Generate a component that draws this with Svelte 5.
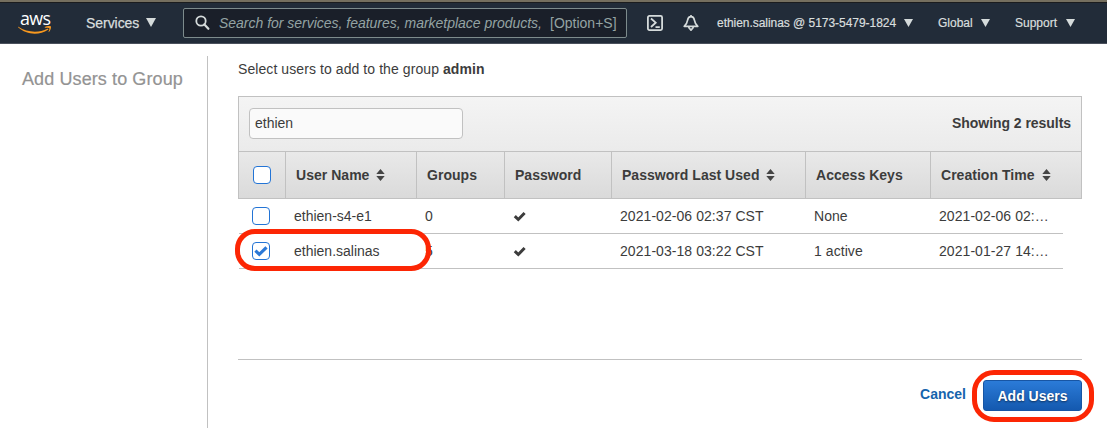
<script>
  const users = [
    { name: 'ethien-s4-e1', groups: 0, last: '2021-02-06 02:37 CST', keys: 'None', created: '2021-02-06 02:…', checked: false },
    { name: 'ethien.salinas', groups: 5, last: '2021-03-18 03:22 CST', keys: '1 active', created: '2021-01-27 14:…', checked: true }
  ];
  const columns = [
    { label: 'User Name', sort: true },
    { label: 'Groups' },
    { label: 'Password' },
    { label: 'Password Last Used', sort: true },
    { label: 'Access Keys' },
    { label: 'Creation Time', sort: true }
  ];
</script>

{#snippet caret(w, h)}
  <svg class="caret" width={w} height={h} viewBox="0 0 10 9" preserveAspectRatio="none"><path d="M0 0h10L5 9z" fill="#d5dbdb" /></svg>
{/snippet}

{#snippet tick()}
  <svg class="tick" width="13" height="11" viewBox="0 0 13 11"><path d="M1.800 5.100l3.500 3.400L11.600 2" fill="none" stroke="#3c3c3c" stroke-width="3" /></svg>
{/snippet}

<header class="top">
  <div class="logo">
    <span class="aws">aws</span>
    <svg width="34" height="9" viewBox="0 0 34 9">
      <path d="M.4.8C9 6.700 21 7.200 29.400 2.800c.8-.4 1.400.4.6 1C21.500 9.500 8.500 9.200.1 1.300-.2.9 0 .6.4.8z" fill="#f7981f" />
      <path d="M26.800 1.200c2-1.300 5.600-1.300 6.100-.7.400.6-.3 4.200-2 5.600-.3.200-.5.100-.4-.2.500-1.200 1.200-3 .8-3.600-.5-.6-2.800-.4-4.300-.6-.3 0-.4-.3-.2-.5z" fill="#f7981f" />
    </svg>
  </div>
  <div class="services"><span>Services</span>{@render caret(10, 9)}</div>
  <div class="search">
    <svg width="16" height="16" viewBox="0 0 16 16"><circle cx="6" cy="6" r="4.700" fill="none" stroke="#d5dbdb" stroke-width="1.800" /><path d="M9.400 9.400l4 4.400" stroke="#d5dbdb" stroke-width="2.200" stroke-linecap="round" /></svg>
    <i>Search for services, features, marketplace products,</i>
    <span>[Option+S]</span>
  </div>
  <svg class="shell" width="16" height="16" viewBox="0 0 16 16" fill="none" stroke="#d5dbdb" stroke-width="1.800"><rect x=".9" y=".9" width="14.200" height="14.200" rx="1.500" /><path d="M4 3.500L8.700 7.700 4 12M8.500 12.200h4.300" /></svg>
  <svg class="bell" width="16" height="16" viewBox="0 0 16 16" fill="none" stroke="#d5dbdb" stroke-width="1.700" stroke-linejoin="round"><path d="M8 1.700C6 1.700 4.900 3.100 4.600 5.200 4.200 8 3.400 9.400 1.200 11.300h13.600c-2.200-1.900-3-3.300-3.400-6.100C11.100 3.100 10 1.700 8 1.700zM8 .1v1.600M5.900 11.800v1L8 15.100l2.100-2.300v-1" /></svg>
  <div class="menu account"><span>ethien.salinas @ 5173-5479-1824</span>{@render caret(9, 8)}</div>
  <div class="menu global"><span>Global</span>{@render caret(9, 8)}</div>
  <div class="menu support"><span>Support</span>{@render caret(9, 8)}</div>
</header>

<div class="page">
  <aside><h1>Add Users to Group</h1></aside>
  <main>
    <p>Select users to add to the group <b>admin</b></p>
    <section class="table">
      <div class="toolbar">
        <div class="filter"><span>ethien</span></div>
        <b>Showing 2 results</b>
      </div>
      <div class="grid head">
        <div class="pick"><span class="box"></span></div>
        {#each columns as c}
          <div class="cell">
            <span>{c.label}</span>
            {#if c.sort}
              <svg width="9" height="12" viewBox="0 0 9 12"><path d="M.3 5L4.500 0l4.200 5zM.3 7L4.500 12l4.200-5z" fill="#444" /></svg>
            {/if}
          </div>
        {/each}
      </div>
      <div class="rows">
        {#each users as u}
          <div class="grid row">
            <div class="pick">
              <span class="box">
                {#if u.checked}
                  <svg width="16" height="16" viewBox="0 0 16 16"><path d="M2.400 7.600l3.900 3.700 7.200-6.900" fill="none" stroke="#2b78d6" stroke-width="3.200" /></svg>
                {/if}
              </span>
              {#if u.checked}<span class="ring user-ring"></span>{/if}
            </div>
            <div class="cell"><span>{u.name}</span></div>
            <div class="cell">{u.groups}</div>
            <div class="cell">{@render tick()}</div>
            <div class="cell"><span class="date">{u.last}</span></div>
            <div class="cell"><span class="date">{u.keys}</span></div>
            <div class="cell"><span class="date">{u.created}</span></div>
          </div>
        {/each}
      </div>
    </section>
    <footer>
      <span class="cancel">Cancel</span>
      <div class="add"><span>Add Users</span><span class="ring add-ring"></span></div>
    </footer>
  </main>
</div>

<style>
  :global(body) { background: #fff; overflow: hidden; }
  :global(#app) { font-family: "Liberation Sans", Arial, sans-serif; font-size: 14px; color: #3c3c3c; }
  svg { display: block; flex: none; }
  span, b, i { white-space: nowrap; }
  .top { box-sizing: border-box; height: 44px; display: flex; align-items: center; background: #222c39; border-top: 2px solid #756f5f; border-bottom: 1px solid #4a505c; box-shadow: inset 0 1px #1b1c1e; color: #d9dede; }
  .logo { width: 34px; height: 24px; margin-left: 18px; display: flex; flex-direction: column; align-items: center; }
  .aws { font: 500 19px/15px "Open Sans", sans-serif; height: 16px; color: #fff; margin-top: 0; letter-spacing: -.6px; transform: scaleX(.94); }
  .services { width: 97px; margin-left: 34px; display: flex; align-items: center; -webkit-text-stroke: .25px; }
  .services span { width: 60px; letter-spacing: -.05px; }
  .search { box-sizing: border-box; width: 444px; height: 30px; display: flex; align-items: center; padding: 0 9px 0 11px; background: #1a1f29; border: 1px solid #7d8b8c; border-radius: 2px; color: #94a3a3; }
  .search i { margin-left: 8px; width: 331px; letter-spacing: -.015px; }
  .shell { margin-left: 20px; }
  .bell { margin-left: 20px; }
  .menu { display: flex; align-items: center; font-size: 12px; -webkit-text-stroke: .2px; }
  .account { margin-left: 18px; width: 221px; }
  .account span { width: 187px; letter-spacing: -.04px; }
  .global { width: 77px; }
  .global span { width: 43px; }
  .support span { width: 51px; }
  .page { display: flex; height: 384px; }
  aside { box-sizing: border-box; width: 208px; margin-top: 12px; border-right: 1px solid #c1c1c1; }
  h1 { margin: 13px 0 0 22px; font-size: 18px; line-height: 21px; font-weight: 400; letter-spacing: .1px; color: #939393; white-space: nowrap; -webkit-text-stroke: .2px; }
  main { width: 844px; margin-left: 30px; }
  p { margin: 17px 0 19px; line-height: 16px; letter-spacing: .08px; }
  .toolbar { box-sizing: border-box; height: 55px; padding: 0 10px 2px; display: flex; align-items: center; justify-content: space-between; border: 1px solid #c1c1c1; border-bottom: 0; background: linear-gradient(#f4f4f4, #ebebeb); }
  .toolbar b { letter-spacing: -.05px; }
  .filter { box-sizing: border-box; width: 214px; height: 31px; padding: 0 5px; line-height: 29px; border: 1px solid #c1c1c1; border-radius: 4px; background: #fafafa; }
  .grid { display: grid; grid-template-columns: 46px 131px 88px 107px 194px 125px 1fr; }
  .head { box-sizing: border-box; height: 48px; border: 1px solid #c1c1c1; background: linear-gradient(#e9e9e9, #dadada); font-weight: 700; }
  .head .cell { border-left: 1px solid #c1c1c1; padding-left: 10px; gap: 7px; letter-spacing: .03px; }
  .cell { display: flex; align-items: center; }
  .pick { position: relative; display: flex; align-items: center; padding-left: 13px; }
  .head .pick { padding-left: 14px; }
  .box { box-sizing: border-box; width: 18px; height: 18px; border: 1px solid #2374d5; border-radius: 4px; background: #fff; }
  .rows { width: 824px; margin-left: 1px; }
  .row { box-sizing: border-box; height: 35px; border-bottom: 1px solid #c1c1c1; }
  .row .cell { padding-left: 9px; }
  .date { letter-spacing: .06px; }
  .ring { position: absolute; box-sizing: border-box; border: 5px solid #fc2604; }
  .user-ring { left: -4px; top: -5px; width: 196px; height: 42px; border-radius: 20px; z-index: 1; }
  footer { margin-top: 90px; border-top: 1px solid #c1c1c1; display: flex; justify-content: flex-end; align-items: center; padding-top: 20px; font-weight: 700; }
  .cancel { color: #1664ad; margin-right: 17px; margin-top: -3px; }
  .add { position: relative; box-sizing: border-box; width: 99px; height: 31px; border: 1px solid #1755a4; border-radius: 3px; background: linear-gradient(#2b7bd8, #1459af); color: #fff; line-height: 31px; text-align: center; text-shadow: 0 1px 2px #0008; }
  .add-ring { left: -12px; top: -11px; width: 122px; height: 52px; border-radius: 22px; }
</style>
